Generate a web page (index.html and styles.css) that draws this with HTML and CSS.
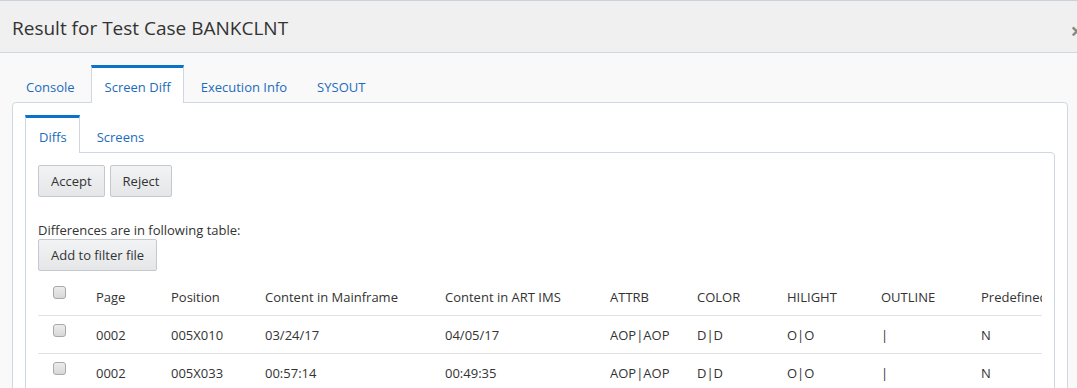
FILE: index.html
```html
<!DOCTYPE html>
<html lang="en">
<head>
    <meta charset="UTF-8">
    <title>Result for Test Case BANKCLNT</title>
    <link rel="stylesheet" href="styles.css">
</head>
<body>
    <div class="dialog">
        <div class="dialog-header">
            <h4 class="dialog-title">Result for Test Case BANKCLNT</h4>
            <span class="close">&times;</span>
        </div>
        <div class="dialog-body">
            <ul class="tabs">
                <li>Console</li>
                <li class="active">Screen Diff</li>
                <li>Execution Info</li>
                <li>SYSOUT</li>
            </ul>
            <div class="tab-panel">
                <ul class="tabs">
                    <li class="active">Diffs</li>
                    <li>Screens</li>
                </ul>
                <div class="tab-panel inner">
                    <div class="actions">
                        <button class="btn">Accept</button>
                        <button class="btn">Reject</button>
                    </div>
                    <p class="note">Differences are in following table:</p>
                    <button class="btn">Add to filter file</button>
                    <div class="table-wrap">
                        <table class="diffs">
                            <colgroup>
                                <col style="width: 58px">
                                <col style="width: 75px">
                                <col style="width: 94px">
                                <col style="width: 180px">
                                <col style="width: 165px">
                                <col style="width: 87px">
                                <col style="width: 90px">
                                <col style="width: 94px">
                                <col style="width: 100px">
                                <col style="width: 120px">
                            </colgroup>
                            <thead>
                                <tr>
                                    <th><input type="checkbox"></th>
                                    <th>Page</th>
                                    <th>Position</th>
                                    <th>Content in Mainframe</th>
                                    <th>Content in ART IMS</th>
                                    <th>ATTRB</th>
                                    <th>COLOR</th>
                                    <th>HILIGHT</th>
                                    <th>OUTLINE</th>
                                    <th>Predefined</th>
                                </tr>
                            </thead>
                            <tbody>
                                <tr>
                                    <td><input type="checkbox"></td>
                                    <td>0002</td>
                                    <td>005X010</td>
                                    <td>03/24/17</td>
                                    <td>04/05/17</td>
                                    <td>AOP|AOP</td>
                                    <td>D|D</td>
                                    <td>O|O</td>
                                    <td>|</td>
                                    <td>N</td>
                                </tr>
                                <tr>
                                    <td><input type="checkbox"></td>
                                    <td>0002</td>
                                    <td>005X033</td>
                                    <td>00:57:14</td>
                                    <td>00:49:35</td>
                                    <td>AOP|AOP</td>
                                    <td>D|D</td>
                                    <td>O|O</td>
                                    <td>|</td>
                                    <td>N</td>
                                </tr>
                            </tbody>
                        </table>
                    </div>
                </div>
            </div>
        </div>
    </div>
</body>
</html>
```

FILE: styles.css
```css
body {
    margin: 0;
    font-family: 'Open Sans', 'Noto Sans', sans-serif;
    font-size: 13px;
    color: #333;
    background: #f9f9f9;
    overflow: hidden;
}
.dialog {
    border-top: 1px solid #c9d1d9;
    height: 387px;
    overflow: hidden;
}
.dialog-header {
    position: relative;
    height: 51px;
    background: #f0f0f0;
    border-bottom: 1px solid #cfd8e1;
    padding-left: 12px;
}
.dialog-title {
    margin: 0;
    font-size: 19px;
    font-weight: normal;
    line-height: 54px;
    color: #333;
}
.close {
    position: absolute;
    right: -6px;
    top: 14px;
    font-size: 22px;
    font-weight: bold;
    color: #888;
}
.dialog-body {
    padding: 12px 9px 0 12px;
}
.tabs {
    display: flex;
    margin: 0;
    padding: 0;
    list-style: none;
}
.tabs li {
    padding: 5px 12px 0 13px;
    line-height: 29px;
    border: 1px solid transparent;
    border-top-width: 3px;
    border-bottom: none;
    margin-right: 3px;
    color: #1c6cba;
}
.tabs li.active {
    background: #fff;
    border-color: #cfd8e1;
    border-top-color: #0a72c9;
    padding-bottom: 1px;
    margin-bottom: -1px;
    position: relative;
    z-index: 1;
}
.tab-panel {
    background: #fff;
    border: 1px solid #cfd8e1;
    border-radius: 4px 4px 0 0;
    padding: 12px 12px 0 12px;
    height: 300px;
}
.tab-panel.inner {
    border-radius: 0 4px 0 0;
}
.actions {
    display: flex;
    gap: 5px;
}
.btn {
    font-family: inherit;
    font-size: 13px;
    color: #333;
    height: 32px;
    padding: 0 12px;
    background: linear-gradient(#f2f3f4, #e4e6e8);
    border: 1px solid #c4c9cf;
    border-radius: 2px;
}
.note {
    margin: 25px 0 0;
    line-height: 17px;
}
.table-wrap {
    margin-top: 8px;
    overflow: hidden;
}
.diffs {
    border-collapse: collapse;
    table-layout: fixed;
    width: 1063px;
}
.diffs th,
.diffs td {
    padding: 0;
    text-align: left;
    font-weight: normal;
    white-space: nowrap;
    overflow: hidden;
}
.diffs th {
    height: 36px;
}
.diffs td {
    height: 37px;
}
.diffs tr {
    border-bottom: 1px solid #dfe3e7;
}
.diffs tbody tr:last-child {
    border-bottom: none;
}
.diffs th:first-child,
.diffs td:first-child {
    padding-left: 15px;
}
.diffs input[type=checkbox] {
    -webkit-appearance: none;
    appearance: none;
    width: 13px;
    height: 13px;
    margin: 0;
    border: 1px solid #a9a9a9;
    border-radius: 3px;
    background: linear-gradient(#ececec, #d8d8d8);
    vertical-align: -1px;
    position: relative;
    top: -4px;
}
```
